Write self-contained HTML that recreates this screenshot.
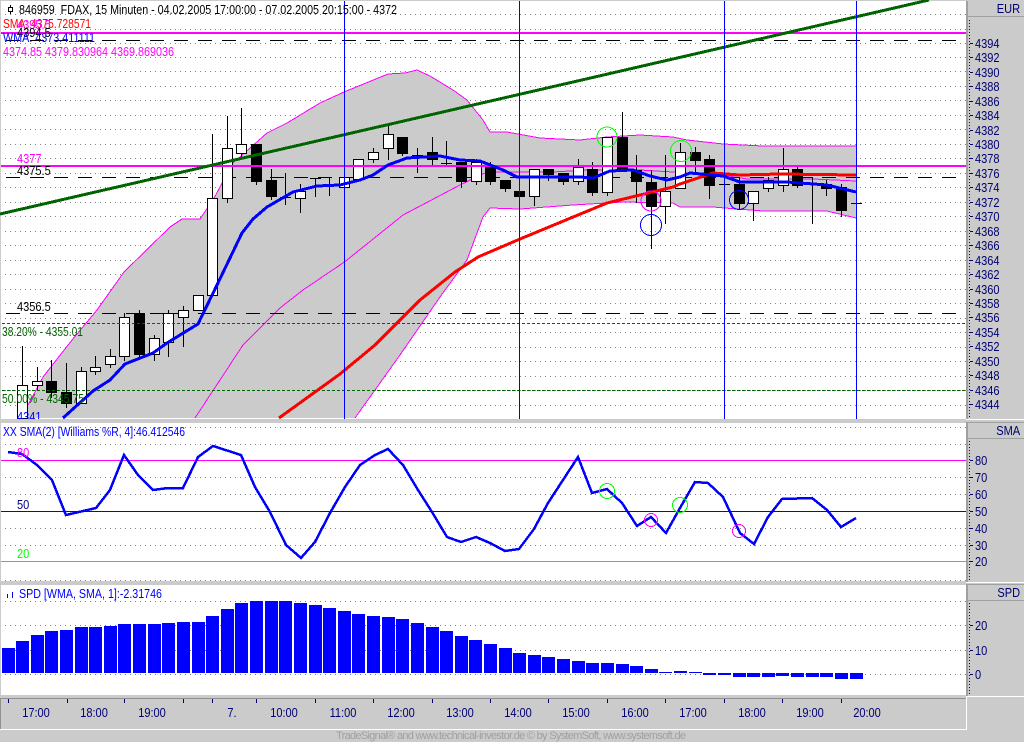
<!DOCTYPE html>
<html><head><meta charset="utf-8"><title>FDAX Chart</title>
<style>
html,body{margin:0;padding:0;background:#cbcbcb;width:1024px;height:742px;overflow:hidden}
svg{display:block}
text{font-family:"Liberation Sans",sans-serif;font-size:13px;transform:scaleX(.85);transform-box:fill-box;transform-origin:0 0;white-space:pre}
text.c{text-anchor:middle;transform-origin:50% 0}
text.e{text-anchor:end;transform-origin:100% 0}
text.n{transform:none}
.s{shape-rendering:crispEdges}
</style></head><body>
<svg width="1024" height="742" viewBox="0 0 1024 742" xmlns="http://www.w3.org/2000/svg">
<rect width="1024" height="742" fill="#cbcbcb"/>
<rect x="1" y="1" width="965" height="418" fill="#fff"/>
<rect x="1" y="423" width="965" height="158" fill="#fff"/>
<rect x="1" y="585" width="965" height="110" fill="#fff"/>
<g class="s">
<path fill="none" stroke="#808080" stroke-dasharray="1 4" d="M5 14.5H966M5 29.5H966M5 43.5H966M5 57.5H966M5 71.5H966M5 86.5H966M5 100.5H966M5 115.5H966M5 129.5H966M5 144.5H966M5 158.5H966M5 173.5H966M5 187.5H966M5 202.5H966M5 216.5H966M5 231.5H966M5 245.5H966M5 260.5H966M5 274.5H966M5 289.5H966M5 303.5H966M5 318.5H966M5 332.5H966M5 347.5H966M5 361.5H966M5 376.5H966M5 390.5H966M5 405.5H966"/>
<polygon fill="#cbcbcb" points="28,405 43,377 72,340 97,310 124,272 170,227 182,219 200,219 213,200 220,187 233,163 267,133 287,123 320,103 344,92 388,74 405,73 417,70 430,76 453,90 467,100 483,120 490,132 507,132 540,138 580,140 607,137 640,135 673,137 687,140 723,144 763,146 856,146 856,218 827,211 763,211 737,209 713,207 680,207 673,203 623,202 573,205 520,209 490,208 483,217 467,260 440,297 400,355 355,418 28,418"/>
<polyline fill="none" stroke="#ff00ff" points="28,405 43,377 72,340 97,310 124,272 170,227 182,219 200,219 213,200 220,187 233,163 267,133 287,123 320,103 344,92 388,74 405,73 417,70 430,76 453,90 467,100 483,120 490,132 507,132 540,138 580,140 607,137 640,135 673,137 687,140 723,144 763,146 856,146"/>
<polyline fill="none" stroke="#ff00ff" points="856,218 827,211 763,211 737,209 713,207 680,207 673,203 623,202 573,205 520,209 490,208 483,217 467,260 440,297 400,355 355,418"/>
<polyline fill="none" stroke="#ff00ff" points="195,418 243,345 280,308 303,290 340,265 347,260 403,215 460,185 487,172 513,172 553,172 587,170 640,170 673,172 723,175 747,179 813,179 856,181"/>
<path fill="none" stroke="#000" stroke-dasharray="14 10" d="M6 40.5H966M6 177.5H966M6 313.5H966"/>
<path fill="none" stroke="#000" d="M22.5 346V385M37.5 367V390M51.5 360V398M66.5 363V408M81.5 367V404M95.5 356V375M110.5 349V368M124.5 313V361M139.5 310V357M154.5 335V361M168.5 310V357M183.5 306V347M212.5 134V198M227.5 116V203M241.5 108V157M256.5 144V185M271.5 169V200M285.5 173V205M280 197.5H291M300.5 184V213M315.5 178V197M310 178.5H321M329.5 178V196M324 185.5H335M344.5 170V190M358.5 159V182M373.5 148V163M388.5 125V160M402.5 137V156M417.5 148V173M412 155.5H423M432.5 137V165M446.5 141V166M441 163.5H452M461.5 162V188M476.5 159V185M490.5 162V185M505.5 180V192M534.5 169V206M548.5 169V181M563.5 173V185M578.5 159V185M592.5 162V196M607.5 137V196M622.5 112V170M636.5 155V203M651.5 170V249M665.5 155V224M680.5 143V188M695.5 147V173M709.5 155V199M719 184.5H730M739.5 177V209M753.5 191V221M768.5 177V192M783.5 148V192M797.5 167V188M812.5 177V224M807 184.5H818M826.5 180V196M841.5 184V217M851 203.5H862"/>
<g stroke="#000" stroke-width="1">
<g fill="#fff">
<rect x="17.5" y="385.5" width="10" height="33"/><rect x="32.5" y="381.5" width="10" height="4"/><rect x="76.5" y="371.5" width="10" height="32"/><rect x="90.5" y="367.5" width="10" height="4"/><rect x="105.5" y="356.5" width="10" height="8"/><rect x="119.5" y="317.5" width="10" height="39"/><rect x="149.5" y="338.5" width="10" height="16"/><rect x="163.5" y="313.5" width="10" height="29"/><rect x="178.5" y="310.5" width="10" height="7"/><rect x="193.5" y="295.5" width="10" height="15"/><rect x="207.5" y="198.5" width="10" height="97"/><rect x="222.5" y="148.5" width="10" height="50"/><rect x="236.5" y="144.5" width="10" height="9"/><rect x="295.5" y="191.5" width="10" height="7"/><rect x="339.5" y="177.5" width="10" height="10"/><rect x="353.5" y="159.5" width="10" height="20"/><rect x="368.5" y="152.5" width="10" height="7"/><rect x="383.5" y="134.5" width="10" height="14"/><rect x="471.5" y="162.5" width="10" height="19"/><rect x="529.5" y="169.5" width="10" height="27"/><rect x="573.5" y="167.5" width="10" height="14"/><rect x="602.5" y="137.5" width="10" height="55"/><rect x="660.5" y="191.5" width="10" height="15"/><rect x="675.5" y="152.5" width="10" height="36"/><rect x="748.5" y="191.5" width="10" height="12"/><rect x="763.5" y="180.5" width="10" height="8"/><rect x="778.5" y="169.5" width="10" height="16"/>
</g>
<g fill="#000">
<rect x="46.5" y="381.5" width="10" height="11"/><rect x="61.5" y="392.5" width="10" height="11"/><rect x="134.5" y="313.5" width="10" height="41"/><rect x="251.5" y="144.5" width="10" height="37"/><rect x="266.5" y="180.5" width="10" height="16"/><rect x="397.5" y="137.5" width="10" height="16"/><rect x="427.5" y="152.5" width="10" height="7"/><rect x="456.5" y="162.5" width="10" height="19"/><rect x="485.5" y="167.5" width="10" height="14"/><rect x="500.5" y="180.5" width="10" height="8"/><rect x="514.5" y="191.5" width="10" height="5"/><rect x="543.5" y="169.5" width="10" height="5"/><rect x="558.5" y="173.5" width="10" height="8"/><rect x="587.5" y="169.5" width="10" height="23"/><rect x="617.5" y="137.5" width="10" height="33"/><rect x="631.5" y="170.5" width="10" height="11"/><rect x="646.5" y="182.5" width="10" height="24"/><rect x="690.5" y="152.5" width="10" height="8"/><rect x="704.5" y="159.5" width="10" height="26"/><rect x="734.5" y="184.5" width="10" height="19"/><rect x="792.5" y="169.5" width="10" height="16"/><rect x="821.5" y="184.5" width="10" height="4"/><rect x="836.5" y="187.5" width="10" height="23"/>
</g>
</g>
<rect x="1" y="32" width="965" height="2" fill="#ff00ff"/>
<rect x="1" y="165" width="965" height="2" fill="#ff00ff"/>
<path fill="none" stroke="#006400" stroke-dasharray="3 2" d="M2 323.5H966M2 390.5H966"/>
<line x1="0" y1="214" x2="929" y2="0" stroke="#006400" stroke-width="3"/>
<polyline fill="none" stroke="#ff0000" stroke-width="3" points="279,418 340,374 375,345 420,300 455,272 478,257 520,239 607,203 673,187 680,184 713,173 740,175 780,174 856,175"/>
<polyline fill="none" stroke="#0000ff" stroke-width="3" points="63,418 93,391 110,380 125,364 153,353 167,343 198,324 217,285 242,233 253,219 267,207 293,192 317,186 340,185 360,180 373,175 388,165 407,158 440,156 460,160 480,161 503,170 517,177 550,177 580,177 593,178 610,171 633,170 650,176 667,180 680,177 690,173 723,176 740,182 787,182 827,185 856,192"/>
<path fill="none" stroke="#0000ff" d="M344.5 1V419M519.5 1V419M724.5 1V419M856.5 1V419"/>
<circle cx="607" cy="137" r="10" fill="none" stroke="#00ff00"/>
<circle cx="681" cy="151" r="10.5" fill="none" stroke="#00ff00"/>
<circle cx="651" cy="201" r="10" fill="none" stroke="#ff00ff"/>
<circle cx="651" cy="225" r="10.5" fill="none" stroke="#0000ff"/>
<circle cx="739" cy="200" r="9.5" fill="none" stroke="#0000ff"/>
<path fill="none" stroke="#000" d="M10.5 5V14"/><rect x="8.5" y="7.5" width="4" height="4" fill="#fff" stroke="#000"/>
</g>
<text x="19" y="14" fill="#000" class="n" textLength="378" lengthAdjust="spacingAndGlyphs">846959  FDAX, 15 Minuten - 04.02.2005 17:00:00 - 07.02.2005 20:15:00 - 4372</text>
<text x="3" y="28" fill="#ff0000" class="n" textLength="88" lengthAdjust="spacingAndGlyphs">SMA: 4375.728571</text>
<text x="17" y="29" fill="#ff00ff">4395.5</text>
<text x="17" y="37" fill="#000">4394.5</text>
<text x="3" y="42" fill="#0000ff" class="n" textLength="92" lengthAdjust="spacingAndGlyphs">WMA: 4373.411111</text>
<text x="3" y="56" fill="#ff00ff" class="n" textLength="171" lengthAdjust="spacingAndGlyphs">4374.85 4379.830964 4369.869036</text>
<text x="17" y="163" fill="#ff00ff">4377</text>
<text x="17" y="175" fill="#000">4375.5</text>
<text x="17" y="311" fill="#000">4356.5</text>
<text x="2" y="336" fill="#006400" class="n" textLength="81" lengthAdjust="spacingAndGlyphs">38.20% - 4355.01</text>
<text x="2" y="403" fill="#006400" class="n" textLength="82" lengthAdjust="spacingAndGlyphs">50.00% - 4345.75</text>
<text x="17" y="421" fill="#0000ff">4341</text>
<rect x="0" y="419" width="966" height="4" fill="#cbcbcb"/>
<g class="s">
<path fill="none" stroke="#808080" stroke-dasharray="1 4" d="M5 427.5H966M5 444.5H966M5 477.5H966M5 494.5H966M5 528.5H966M5 545.5H966M5 580.5H966"/>
<path fill="none" stroke="#ff00ff" d="M1 460.5H966"/>
<path fill="none" stroke="#0000ff" d="M1 511.5H966"/>
<path fill="none" stroke="#00ff00" d="M1 561.5H966"/>
<polyline fill="none" stroke="#0000ff" stroke-width="2.5" points="8,452 22,454 37,465 52,480 66,515 96,508 110,490 124,455 138,475 153,490 168,488 183,488 198,457 213,446 241,455 255,487 270,512 286,545 301,558 315,542 330,513 345,487 360,465 375,455 388,449 403,465 418,490 432,512 447,537 461,542 476,537 490,543 505,551 519,549 534,529 548,503 563,480 578,457 592,493 607,489 622,503 637,526 651,517 666,533 680,508 695,482 708,483 723,497 740,533 754,544 768,517 782,499 812,498 827,510 841,527 856,518"/>
<circle cx="607" cy="491" r="7.5" fill="none" stroke="#00ff00"/>
<circle cx="651" cy="520" r="6.5" fill="none" stroke="#ff00ff"/>
<circle cx="680" cy="505" r="7.5" fill="none" stroke="#00ff00"/>
<circle cx="739" cy="531" r="6.5" fill="none" stroke="#ff00ff"/>
</g>
<text x="3" y="436" fill="#0000ff" class="n" textLength="182" lengthAdjust="spacingAndGlyphs">XX SMA(2) [Williams %R, 4]:46.412546</text>
<text x="17" y="457" fill="#ff00ff">80</text>
<text x="17" y="509" fill="#000080">50</text>
<text x="17" y="558" fill="#00ff00">20</text>
<g class="s">
<path fill="none" stroke="#808080" stroke-dasharray="1 4" d="M5 601.5H966M5 625.5H966M5 650.5H966M5 674.5H966"/>
<g fill="#0000ff">
<rect x="2" y="648" width="13" height="25"/><rect x="16" y="641" width="13" height="32"/><rect x="31" y="635" width="13" height="38"/><rect x="45" y="631" width="13" height="42"/><rect x="60" y="630" width="13" height="43"/><rect x="75" y="627" width="13" height="46"/><rect x="89" y="627" width="13" height="46"/><rect x="104" y="626" width="13" height="47"/><rect x="118" y="624" width="13" height="49"/><rect x="133" y="624" width="13" height="49"/><rect x="148" y="624" width="13" height="49"/><rect x="162" y="623" width="13" height="50"/><rect x="177" y="622" width="13" height="51"/><rect x="192" y="622" width="13" height="51"/><rect x="206" y="616" width="13" height="57"/><rect x="221" y="609" width="13" height="64"/><rect x="235" y="603" width="13" height="70"/><rect x="250" y="601" width="13" height="72"/><rect x="265" y="601" width="13" height="72"/><rect x="279" y="601" width="13" height="72"/><rect x="294" y="603" width="13" height="70"/><rect x="309" y="605" width="13" height="68"/><rect x="323" y="608" width="13" height="65"/><rect x="338" y="611" width="13" height="62"/><rect x="352" y="614" width="13" height="59"/><rect x="367" y="616" width="13" height="57"/><rect x="382" y="617" width="13" height="56"/><rect x="396" y="619" width="13" height="54"/><rect x="411" y="623" width="13" height="50"/><rect x="426" y="627" width="13" height="46"/><rect x="440" y="631" width="13" height="42"/><rect x="455" y="636" width="13" height="37"/><rect x="469" y="640" width="13" height="33"/><rect x="484" y="644" width="13" height="29"/><rect x="499" y="648" width="13" height="25"/><rect x="513" y="653" width="13" height="20"/><rect x="528" y="655" width="13" height="18"/><rect x="542" y="657" width="13" height="16"/><rect x="557" y="659" width="13" height="14"/><rect x="572" y="661" width="13" height="12"/><rect x="586" y="663" width="13" height="10"/><rect x="601" y="663" width="13" height="10"/><rect x="616" y="664" width="13" height="9"/><rect x="630" y="666" width="13" height="7"/><rect x="645" y="669" width="13" height="4"/><rect x="659" y="672" width="13" height="1"/><rect x="674" y="671" width="13" height="2"/><rect x="689" y="672" width="13" height="1"/><rect x="703" y="673" width="13" height="2"/><rect x="718" y="673" width="13" height="2"/><rect x="733" y="673" width="13" height="4"/><rect x="747" y="673" width="13" height="4"/><rect x="762" y="673" width="13" height="4"/><rect x="776" y="673" width="13" height="3"/><rect x="791" y="673" width="13" height="4"/><rect x="806" y="673" width="13" height="4"/><rect x="820" y="673" width="13" height="4"/><rect x="835" y="673" width="13" height="6"/><rect x="850" y="673" width="13" height="6"/>
</g>
<path fill="none" stroke="#0000ff" d="M7.5 594V598M12.5 592V598"/>
</g>
<text x="19" y="598" fill="#0000ff" class="n" textLength="143" lengthAdjust="spacingAndGlyphs">SPD [WMA, SMA, 1]:-2.31746</text>
<g class="s">
<rect x="1" y="698" width="965" height="1" fill="#909090"/>
<rect x="0" y="698" width="1" height="31" fill="#909090"/>
<rect x="0" y="729" width="967" height="1" fill="#fff"/>
<rect x="966" y="696" width="1" height="34" fill="#fff"/>
<rect x="967" y="696" width="57" height="1" fill="#fff"/>
<path fill="none" stroke="#000070" d="M8.5 699V703M67.5 699V703M124.5 699V703M183.5 699V703M212.5 699V703M256.5 699V703M315.5 699V703M373.5 699V703M432.5 699V703M490.5 699V703M548.5 699V703M607.5 699V703M665.5 699V703M724.5 699V703M782.5 699V703M841.5 699V703"/>
<rect x="966" y="1" width="2" height="418" fill="#a0a0a0"/>
<rect x="966" y="16" width="58" height="1" fill="#a0a0a0"/>
<rect x="966" y="419" width="58" height="1" fill="#fff"/>
<rect x="966" y="422" width="58" height="1" fill="#a0a0a0"/>
<rect x="966" y="422" width="2" height="160" fill="#a0a0a0"/>
<rect x="966" y="438" width="58" height="1" fill="#a0a0a0"/>
<rect x="966" y="582" width="58" height="1" fill="#fff"/>
<rect x="966" y="584" width="58" height="1" fill="#a0a0a0"/>
<rect x="966" y="584" width="2" height="112" fill="#a0a0a0"/>
<rect x="966" y="600" width="58" height="1" fill="#a0a0a0"/>
<path fill="none" stroke="#000070" stroke-dasharray="1 2" d="M969.5 20V418M969.5 441V580M969.5 603V695"/>
<path fill="none" stroke="#000070" d="M970 43.5H973M970 57.5H973M970 72.5H973M970 86.5H973M970 101.5H973M970 115.5H973M970 130.5H973M970 144.5H973M970 158.5H973M970 173.5H973M970 187.5H973M970 202.5H973M970 216.5H973M970 231.5H973M970 245.5H973M970 260.5H973M970 274.5H973M970 289.5H973M970 303.5H973M970 317.5H973M970 332.5H973M970 346.5H973M970 361.5H973M970 375.5H973M970 390.5H973M970 404.5H973M970 460.5H973M970 477.5H973M970 494.5H973M970 511.5H973M970 528.5H973M970 545.5H973M970 561.5H973M970 625.5H973M970 650.5H973M970 674.5H973"/>
</g>
<g fill="#000070">
<text x="1020" y="13" class="e">EUR</text>
<text x="975" y="48">4394</text><text x="975" y="62">4392</text><text x="975" y="77">4390</text><text x="975" y="91">4388</text><text x="975" y="106">4386</text><text x="975" y="120">4384</text><text x="975" y="135">4382</text><text x="975" y="149">4380</text><text x="975" y="163">4378</text><text x="975" y="178">4376</text><text x="975" y="192">4374</text><text x="975" y="207">4372</text><text x="975" y="221">4370</text><text x="975" y="236">4368</text><text x="975" y="250">4366</text><text x="975" y="265">4364</text><text x="975" y="279">4362</text><text x="975" y="294">4360</text><text x="975" y="308">4358</text><text x="975" y="322">4356</text><text x="975" y="337">4354</text><text x="975" y="351">4352</text><text x="975" y="366">4350</text><text x="975" y="380">4348</text><text x="975" y="395">4346</text><text x="975" y="409">4344</text>
<text x="1020" y="435" class="e">SMA</text>
<text x="975" y="465">80</text><text x="975" y="482">70</text><text x="975" y="499">60</text><text x="975" y="516">50</text><text x="975" y="533">40</text><text x="975" y="550">30</text><text x="975" y="566">20</text>
<text x="1020" y="597" class="e">SPD</text>
<text x="975" y="630">20</text><text x="975" y="655">10</text><text x="975" y="679">0</text>
<text x="36" y="717" class="c">17:00</text><text x="94" y="717" class="c">18:00</text><text x="152" y="717" class="c">19:00</text><text x="232" y="717" class="c">7.</text><text x="284" y="717" class="c">10:00</text><text x="343" y="717" class="c">11:00</text><text x="401" y="717" class="c">12:00</text><text x="460" y="717" class="c">13:00</text><text x="518" y="717" class="c">14:00</text><text x="576" y="717" class="c">15:00</text><text x="635" y="717" class="c">16:00</text><text x="693" y="717" class="c">17:00</text><text x="752" y="717" class="c">18:00</text><text x="810" y="717" class="c">19:00</text><text x="867" y="717" class="c">20:00</text>
</g>
<text x="336" y="739" fill="#a0a0a0" class="n" textLength="350" style="font-size:11px" lengthAdjust="spacing">TradeSignal® and www.technical-investor.de © by SystemSoft, www.systemsoft.de</text>
</svg>
</body></html>
